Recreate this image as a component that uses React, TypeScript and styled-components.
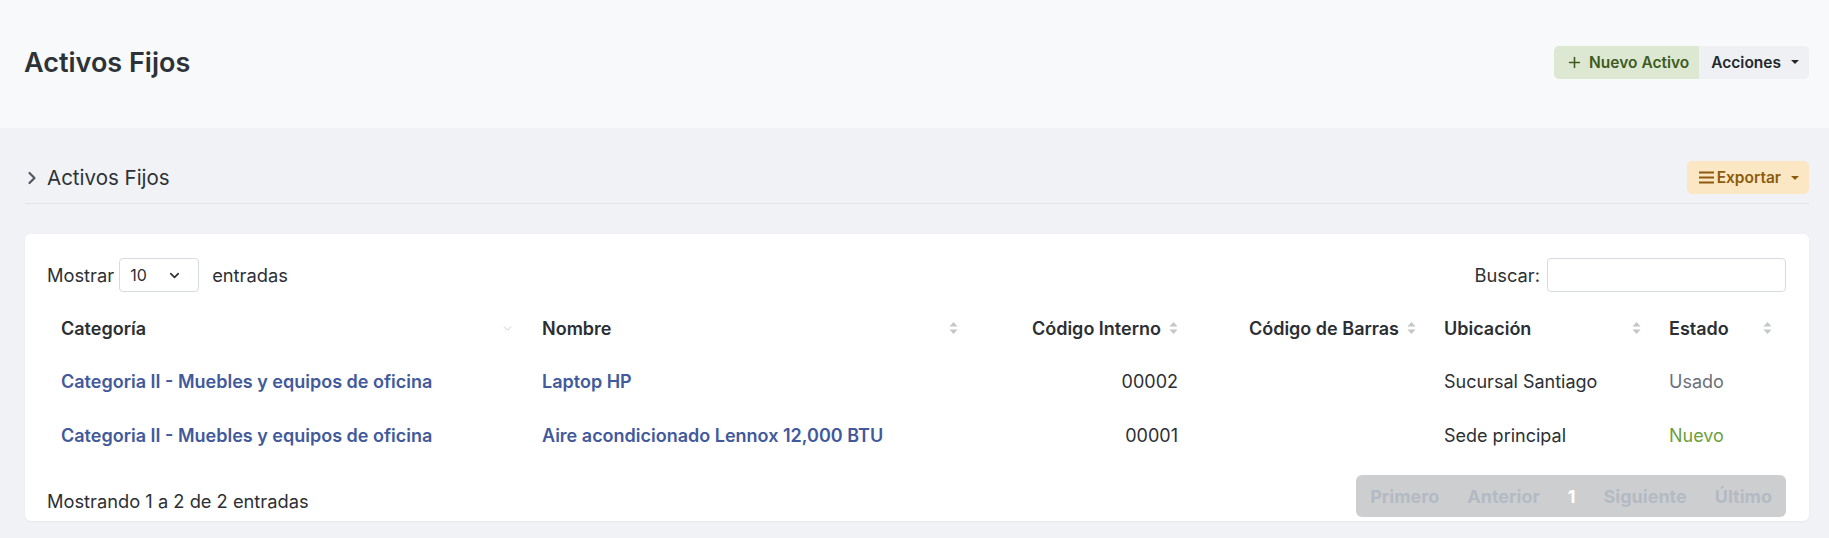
import React from 'react'
import styled, { createGlobalStyle } from 'styled-components'
import { ChevronRight, ChevronDown, Plus } from 'lucide-react'

const GlobalStyle = createGlobalStyle`
  body {
    margin: 0;
    background: #f1f2f6;
    font-family: Inter, "Noto Sans", sans-serif;
    color: #2c3035;
  }
  * { box-sizing: border-box; }
`

const Header = styled.header`
  height: 128px;
  background: #f8f9fb;
  display: flex;
  align-items: center;
  justify-content: space-between;
  padding: 0 20px 4px 24px;
`
const Title = styled.h1`
  margin: 0;
  font-size: 27px;
  font-weight: 600;
  color: #2d3238;
`
const ButtonGroup = styled.div`
  display: flex;
  border-radius: 5px;
  overflow: hidden;
`

type Variant = 'success' | 'light' | 'warning'
const palette: Record<Variant, { bg: string; fg: string }> = {
  success: { bg: '#dce8d1', fg: '#3f5a1f' },
  light: { bg: '#eef0f4', fg: '#23272b' },
  warning: { bg: '#fce7c5', fg: '#8c5b0c' },
}

const Button = styled.button<{ $variant: Variant }>`
  height: 33px;
  display: flex;
  align-items: center;
  gap: 6px;
  padding: 0 10px 0 12px;
  border: none;
  border-radius: ${p => (p.$variant === 'warning' ? '5px' : '0')};
  background: ${p => palette[p.$variant].bg};
  color: ${p => palette[p.$variant].fg};
  font-family: inherit;
  font-size: 15.5px;
  font-weight: 600;
  cursor: pointer;
`
const Caret = styled.span`
  width: 0;
  height: 0;
  margin-left: 4px;
  border-left: 4px solid transparent;
  border-right: 4px solid transparent;
  border-top: 4px solid currentColor;
`
const Burger = () => (
  <svg width="15" height="13" viewBox="0 0 15 13">
    <rect x="0" y="0.5" width="15" height="2" fill="currentColor" />
    <rect x="0" y="5.5" width="15" height="2" fill="currentColor" />
    <rect x="0" y="10.5" width="15" height="2" fill="currentColor" />
  </svg>
)

const Main = styled.main`
  padding: 33px 20px 17px 25px;
`
const SectionBar = styled.div`
  display: flex;
  align-items: center;
  justify-content: space-between;
  padding-bottom: 9px;
  border-bottom: 1px solid #e2e4e9;
`
const SectionTitle = styled.div`
  display: flex;
  align-items: center;
  gap: 5px;
  font-size: 20.5px;
  color: #2d3238;
  svg { color: #505860; margin-left: -3px; }
`
const Card = styled.section`
  margin-top: 30px;
  background: #fff;
  border-radius: 6px;
  padding: 24px 23px 4px 22px;
  box-shadow: 0 1px 2px rgba(20, 30, 50, 0.05);
`
const Controls = styled.div`
  display: flex;
  justify-content: space-between;
  align-items: center;
  height: 34px;
  font-size: 18.3px;
`
const Inline = styled.label`
  display: flex;
  align-items: center;
  gap: 5px;
`
const Select = styled.div`
  width: 80px;
  height: 34px;
  border: 1px solid #d7dadf;
  border-radius: 4px;
  display: flex;
  align-items: center;
  justify-content: space-between;
  padding: 0 16px 0 10px;
  margin-right: 8px;
  font-size: 16px;
`
const Input = styled.input`
  width: 239px;
  height: 34px;
  border: 1px solid #d7dadf;
  border-radius: 4px;
  margin-left: 2px;
`
const Table = styled.table`
  margin-top: 10px;
  width: 100%;
  table-layout: fixed;
  border-collapse: collapse;
  font-size: 18px;
`
const Th = styled.th<{ $numeric?: boolean }>`
  height: 52px;
  padding: 0 14px;
  font-weight: 600;
  color: #2b2f34;
  text-align: ${p => (p.$numeric ? 'right' : 'left')};
`
const ThInner = styled.div<{ $numeric?: boolean }>`
  display: flex;
  align-items: center;
  justify-content: ${p => (p.$numeric ? 'flex-end' : 'space-between')};
  gap: 8px;
  white-space: nowrap;
  svg { flex: none; }
`
const Td = styled.td<{ $numeric?: boolean; $tone?: 'link' | 'muted' | 'ok' }>`
  height: 54px;
  padding: 0 14px;
  white-space: nowrap;
  text-align: ${p => (p.$numeric ? 'right' : 'left')};
  font-weight: ${p => (p.$tone === 'link' ? 600 : 400)};
  color: ${p =>
    p.$tone === 'link' ? '#42599c' : p.$tone === 'muted' ? '#6b7079' : p.$tone === 'ok' ? '#6c9f3c' : '#2c3035'};
`
const Footer = styled.div`
  margin-top: 13px;
  display: flex;
  justify-content: space-between;
  align-items: center;
  font-size: 18.3px;
`
const Info = styled.span`
  padding-top: 9px;
`
const Pager = styled.div`
  display: flex;
  height: 42px;
  background: #cdcecf;
  border-radius: 6px;
  align-items: center;
`
const PageItem = styled.span<{ $current?: boolean }>`
  padding: 0 14px;
  font-size: 18px;
  font-weight: 700;
  color: ${p => (p.$current ? '#fff' : '#b3bac4')};
`

const SortIcon = () => (
  <svg width="9" height="12" viewBox="0 0 9 12">
    <path d="M4.5 0 L8.5 4.5 L0.5 4.5 Z M0.5 7.5 L8.5 7.5 L4.5 12 Z" fill="#c2c5ca" />
  </svg>
)

const rows = [
  { cat: 'Categoria II - Muebles y equipos de oficina', name: 'Laptop HP', code: '00002', loc: 'Sucursal Santiago', state: 'Usado' },
  { cat: 'Categoria II - Muebles y equipos de oficina', name: 'Aire acondicionado Lennox 12,000 BTU', code: '00001', loc: 'Sede principal', state: 'Nuevo' },
]

const App = () => {
  return (
    <>
      <GlobalStyle />
      <Header>
        <Title>Activos Fijos</Title>
        <ButtonGroup>
          <Button $variant="success">
            <Plus size={17} strokeWidth={2.2} />
            Nuevo Activo
          </Button>
          <Button $variant="light">
            Acciones
            <Caret />
          </Button>
        </ButtonGroup>
      </Header>
      <Main>
        <SectionBar>
          <SectionTitle>
            <ChevronRight size={20} strokeWidth={2.6} />
            Activos Fijos
          </SectionTitle>
          <Button $variant="warning">
            <Burger />
            <span style={{ marginLeft: -3 }}>Exportar</span>
            <Caret />
          </Button>
        </SectionBar>
        <Card>
          <Controls>
            <Inline>
              Mostrar
              <Select>
                10
                <ChevronDown size={15} strokeWidth={2.6} color="#2c3035" />
              </Select>
              entradas
            </Inline>
            <Inline>
              Buscar:
              <Input type="search" />
            </Inline>
          </Controls>
          <Table>
            <colgroup>
              <col style={{ width: 481 }} />
              <col style={{ width: 444 }} />
              <col style={{ width: 220 }} />
              <col style={{ width: 238 }} />
              <col style={{ width: 225 }} />
              <col style={{ width: 131 }} />
            </colgroup>
            <thead>
              <tr>
                <Th>
                  <ThInner>
                    Categoría
                    <ChevronDown size={13} strokeWidth={1.4} color="#b2b6bc" />
                  </ThInner>
                </Th>
                <Th>
                  <ThInner>
                    Nombre
                    <SortIcon />
                  </ThInner>
                </Th>
                <Th $numeric>
                  <ThInner $numeric>
                    Código Interno
                    <SortIcon />
                  </ThInner>
                </Th>
                <Th $numeric>
                  <ThInner $numeric>
                    Código de Barras
                    <SortIcon />
                  </ThInner>
                </Th>
                <Th>
                  <ThInner>
                    Ubicación
                    <SortIcon />
                  </ThInner>
                </Th>
                <Th>
                  <ThInner>
                    Estado
                    <SortIcon />
                  </ThInner>
                </Th>
              </tr>
            </thead>
            <tbody>
              {rows.map(r => (
                <tr key={r.code}>
                  <Td $tone="link">{r.cat}</Td>
                  <Td $tone="link">{r.name}</Td>
                  <Td $numeric>{r.code}</Td>
                  <Td $numeric></Td>
                  <Td>{r.loc}</Td>
                  <Td $tone={r.state === 'Nuevo' ? 'ok' : 'muted'}>{r.state}</Td>
                </tr>
              ))}
            </tbody>
          </Table>
          <Footer>
            <Info>Mostrando 1 a 2 de 2 entradas</Info>
            <Pager>
              <PageItem>Primero</PageItem>
              <PageItem>Anterior</PageItem>
              <PageItem $current>1</PageItem>
              <PageItem>Siguiente</PageItem>
              <PageItem>Último</PageItem>
            </Pager>
          </Footer>
        </Card>
      </Main>
    </>
  )
}

export default App
